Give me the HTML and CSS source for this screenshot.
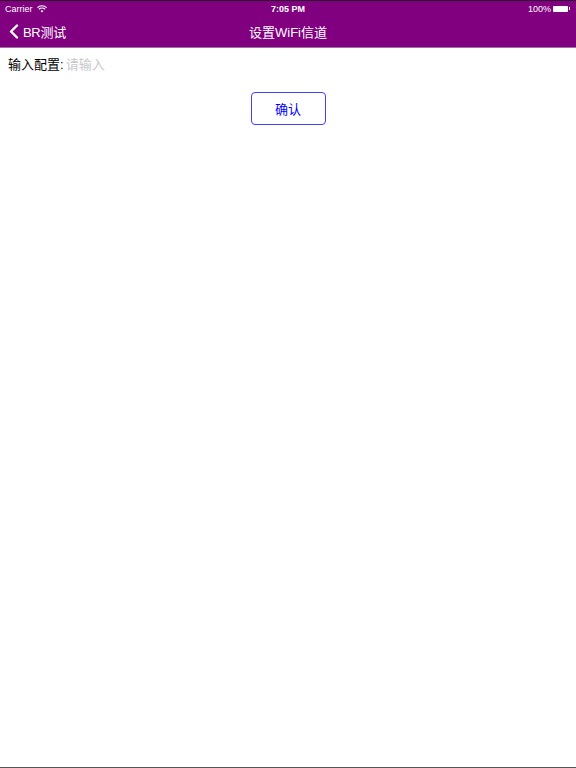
FILE: index.html
```html
<!DOCTYPE html>
<html>
<head>
<meta charset="utf-8">
<link rel="stylesheet" href="styles.css">
</head>
<body>
<div class="screen">
  <header class="bar">
    <div class="status">
      <div class="st-left">Carrier
        <svg class="wifi" width="10" height="8" viewBox="0 0 10 8"><path d="M5 7.5 L6.4 6 A2 2 0 0 0 3.6 6 Z" fill="#fff"/><path d="M1.9 4.3 A4.4 4.4 0 0 1 8.1 4.3" stroke="#fff" stroke-width="1.2" fill="none"/><path d="M0.4 2.6 A6.6 6.6 0 0 1 9.6 2.6" stroke="#fff" stroke-width="1.2" fill="none"/></svg>
      </div>
      <div class="st-time">7:05 PM</div>
      <div class="st-right">100%
        <span class="battery"><span class="batt-body"></span><span class="batt-tip"></span></span>
      </div>
    </div>
    <nav class="nav">
      <div class="back">
        <svg width="10" height="15" viewBox="0 0 10 15"><path d="M8 1.5 L2 7.5 L8 13.5" stroke="#fff" stroke-width="2.4" fill="none" stroke-linecap="round" stroke-linejoin="round"/></svg>
        <span>BR测试</span>
      </div>
      <div class="title">设置WiFi信道</div>
    </nav>
  </header>
  <main class="content">
    <div class="row">
      <span class="label">输入配置:</span><span class="placeholder">请输入</span>
    </div>
    <div class="btn-wrap"><button class="confirm">确认</button></div>
  </main>
</div>
</body>
</html>
```
FILE: styles.css
```css
html, body { margin: 0; padding: 0; }
body {
  font-family: "Helvetica Neue", "Liberation Sans", "Noto Sans CJK SC", sans-serif;
  background: #fff;
}
.screen {
  width: 576px;
  height: 768px;
  box-sizing: border-box;
  border-top: 1px solid #2a1a2a;
  border-bottom: 1px solid #555;
  display: flex;
  flex-direction: column;
}
.bar {
  background: #800080;
  color: #fff;
  border-bottom: 1px solid #a070a0;
}
.status {
  height: 15px;
  display: flex;
  align-items: center;
  justify-content: space-between;
  padding: 0 5px;
  font-size: 9px;
  position: relative;
}
.st-left { display: flex; align-items: center; gap: 4px; }
.st-time {
  position: absolute;
  left: 0; right: 0;
  text-align: center;
  font-weight: bold;
}
.st-right { display: flex; align-items: center; gap: 2px; padding-right: 1px; }
.battery { display: flex; align-items: center; }
.batt-body { width: 15px; height: 6px; background: #fff; border-radius: 1px; }
.batt-tip { width: 1px; height: 3px; background: #fff; margin-left: 1px; }
.nav {
  height: 31px;
  display: flex;
  align-items: center;
  position: relative;
  font-size: 13px;
}
.back {
  display: flex;
  align-items: center;
  gap: 4px;
  padding-left: 9px;
}
.back span { letter-spacing: -0.3px; }
.title {
  position: absolute;
  left: 0; right: 0;
  text-align: center;
  pointer-events: none;
}
.content { flex: 1; padding: 8px 8px 0; }
.row {
  font-size: 13px;
  line-height: 18px;
  color: #000;
}
.placeholder { color: #c7c7cd; margin-left: 2px; }
.btn-wrap {
  display: flex;
  justify-content: center;
  margin-top: 18px;
}
.confirm {
  width: 75px;
  height: 33px;
  background: #fff;
  border: 1px solid #4040ff;
  border-radius: 4px;
  color: #0000ff;
  font-size: 13px;
  font-family: inherit;
  padding: 0;
}
```
